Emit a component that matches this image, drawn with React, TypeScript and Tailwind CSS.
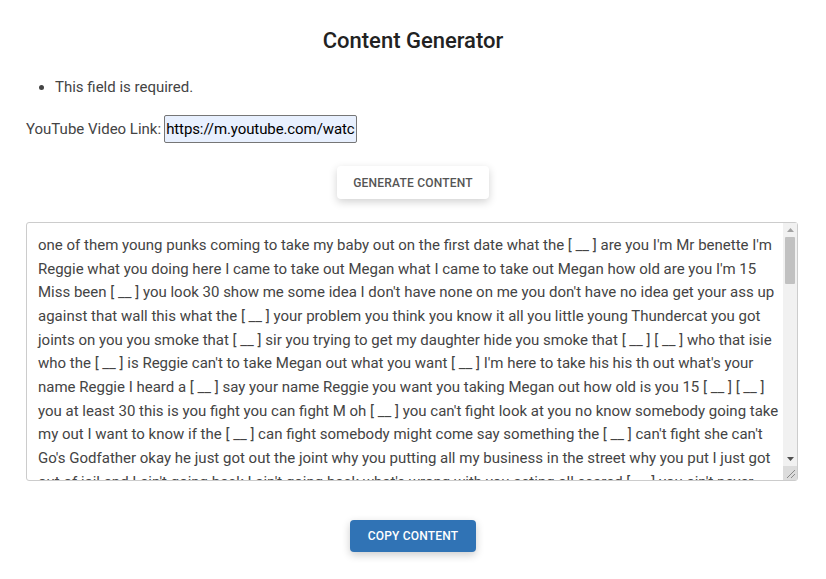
import React from "react";

const TEXT =
  "one of them young punks coming to take my baby out on the first date what the [ __ ] are you I'm Mr benette I'm Reggie what you doing here I came to take out Megan what I came to take out Megan how old are you I'm 15 Miss been [ __ ] you look 30 show me some idea I don't have none on me you don't have no idea get your ass up against that wall this what the [ __ ] your problem you think you know it all you little young Thundercat you got joints on you you smoke that [ __ ] sir you trying to get my daughter hide you smoke that [ __ ] [ __ ] who that isie who the [ __ ] is Reggie can't to take Megan out what you want [ __ ] I'm here to take his his th out what's your name Reggie I heard a [ __ ] say your name Reggie you want you taking Megan out how old is you 15 [ __ ] [ __ ] you at least 30 this is you fight you can fight M oh [ __ ] you can't fight look at you no know somebody going take my out I want to know if the [ __ ] can fight somebody might come say something the [ __ ] can't fight she can't Go's Godfather okay he just got out the joint why you putting all my business in the street why you put I just got out of jail and I ain't going back I ain't going back what's wrong with you acting all scared [ __ ] you ain't never been to jail in your life get out of here boy go on take her out have her back by nine o'clock and if anything happen to my baby I'm coming to find you you hear me";

function FakeScrollbar() {
  return (
    <div className="pointer-events-none absolute bottom-[1px] right-[1px] top-[1px] flex w-[14px] flex-col bg-[#f1f1f1]">
      <div className="flex h-[14px] items-center justify-center">
        <svg width="7" height="4" viewBox="0 0 7 4">
          <path d="M0 4 L3.5 0 L7 4 Z" fill="#a3a3a3" />
        </svg>
      </div>
      <div className="mx-[2px] h-[47px] rounded-[1px] bg-[#c1c1c1]" />
      <div className="flex-1" />
      <div className="flex h-[14px] items-center justify-center">
        <svg width="7" height="4" viewBox="0 0 7 4">
          <path d="M0 0 L3.5 4 L7 0 Z" fill="#505050" />
        </svg>
      </div>
      <div className="flex h-[14px] items-end justify-end bg-[#dcdcdc]">
        <svg width="14" height="14" viewBox="0 0 14 14">
          <path d="M12 4 L4 12 M12 8 L8 12" stroke="#8a8a8a" strokeWidth="1" />
        </svg>
      </div>
    </div>
  );
}

export default function App() {
  return (
    <div
      className="w-[826px] min-h-[579px] bg-white text-[#444]"
      style={{ fontFamily: "Roboto, 'Noto Sans', sans-serif" }}
    >
      <div className="flex flex-col px-[26px] pt-[28px]">
        <h1 className="text-center text-[22px] font-medium leading-[26px] text-[#222]">
          Content Generator
        </h1>
        <ul className="mt-[23px] list-disc pl-[29px] text-[15px] leading-[20px] text-[#444]">
          <li>This field is required.</li>
        </ul>
        <div className="mt-[18px] flex items-center gap-[3px] text-[15px]">
          <label className="text-[#444]">YouTube Video Link:</label>
          <input
            readOnly
            value="https://m.youtube.com/watch?v=abc123"
            className="h-[28px] w-[193px] rounded-[2px] border border-[#767676] bg-[#e8f0fe] px-[1px] text-[15px] tracking-[-0.1px] text-black outline-none"
          />
        </div>
        <div className="mt-[23px] flex justify-center">
          <button className="h-[33px] w-[152px] rounded-[4px] bg-white text-[12px] font-medium uppercase tracking-[0.2px] text-[#555] shadow-[0_3px_8px_rgba(0,0,0,0.18)]">
            Generate Content
          </button>
        </div>
        <div className="relative mt-[23px] h-[259px] w-[772px]">
          <textarea
            readOnly
            value={TEXT}
            className="block h-full w-full resize-none overflow-y-scroll rounded-[3px] border border-[#ccc] pl-[11px] pr-[16px] pt-[11px] text-[15px] leading-[23.67px] text-[#444] outline-none"
          />
          <FakeScrollbar />
        </div>
        <div className="mt-[39px] flex justify-center">
          <button className="h-[32px] w-[126px] rounded-[4px] bg-[#3073b5] text-[12px] font-medium uppercase tracking-[0.2px] text-white shadow-[0_3px_8px_rgba(0,0,0,0.2)]">
            Copy Content
          </button>
        </div>
      </div>
    </div>
  );
}
